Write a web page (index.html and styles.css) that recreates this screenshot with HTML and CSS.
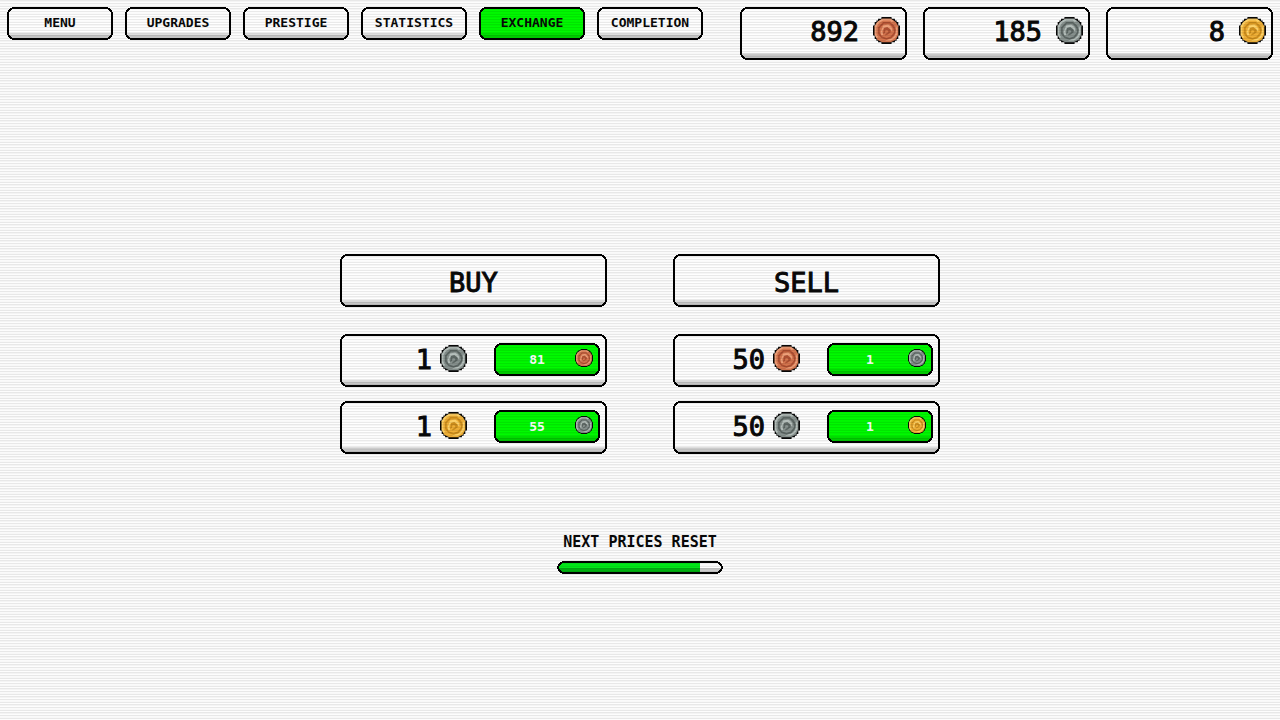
FILE: index.html
```
<!DOCTYPE html>
<html lang="en">
 <head>
 <meta charset="UTF-8">
 <title>Exchange</title>
 <link rel="stylesheet" href="styles.css">
 </head>

 <body>

  <!-- one coin drawing, coloured by .copper / .silver / .gold -->
  <svg class="defs" aria-hidden="true">
   <symbol id="coin" viewBox="0 0 32 32">
    <path class="c_edge" d="M10 0h12v2h4v2h2v2h2v4h2v12h-2v4h-2v2h-2v2h-4v2H10v-2H6v-2H4v-2H2v-4H0V10h2V6h2V4h2V2h4z"/>
    <path class="c_base" d="M11 2h10l6 4 3 5v10l-3 6-6 3H11l-6-3-3-6V11l3-5z"/>
    <path class="c_light" d="M11 2h10l4 3-3 1-2-2h-8L7 7 4 12v8l2 4-2 1-2-4V11l3-5zM27 12l2-1v9l-3 5-5 3h-6v-1l6-1 4-3 2-4z"/>
    <path class="c_dark" d="M12 6h8l5 4 2 5-1 5-4 5-6 2-6-2-4-5V12zm1 2l-5 5v6l3 4 5 2 5-2 4-5-1-5-4-5z"/>
    <path class="c_light" d="M12 10l6-1 4 3 1 4-2 1-1-3-3-2-4 1-2 4 1 4-2 1-1-4z"/>
    <path class="c_dark" d="M13 13l4-1 4 3v3l-4 3-3 1 1-2 3-2v-2l-3-1-1 4-2 1z"/>
   </symbol>
  </svg>

  <header class="top">
   <nav class="tabs">
    <button class="box tab">MENU</button>
    <button class="box tab">UPGRADES</button>
    <button class="box tab">PRESTIGE</button>
    <button class="box tab">STATISTICS</button>
    <button class="box tab green">EXCHANGE</button>
    <button class="box tab">COMPLETION</button>
   </nav>
   <div class="wallet">
    <div class="box purse">892 <svg class="coin copper"><use href="#coin"/></svg></div>
    <div class="box purse">185 <svg class="coin silver"><use href="#coin"/></svg></div>
    <div class="box purse">8 <svg class="coin gold"><use href="#coin"/></svg></div>
   </div>
  </header>

  <main>
   <div class="exchange">
    <section class="column">
     <h2 class="box title">BUY</h2>
     <div class="box offer">1 <svg class="coin silver"><use href="#coin"/></svg>
      <button class="box price green"><span>81</span><svg class="coin small copper"><use href="#coin"/></svg></button>
     </div>
     <div class="box offer">1 <svg class="coin gold"><use href="#coin"/></svg>
      <button class="box price green"><span>55</span><svg class="coin small silver"><use href="#coin"/></svg></button>
     </div>
    </section>
    <section class="column">
     <h2 class="box title">SELL</h2>
     <div class="box offer">50 <svg class="coin copper"><use href="#coin"/></svg>
      <button class="box price green"><span>1</span><svg class="coin small silver"><use href="#coin"/></svg></button>
     </div>
     <div class="box offer">50 <svg class="coin silver"><use href="#coin"/></svg>
      <button class="box price green"><span>1</span><svg class="coin small gold"><use href="#coin"/></svg></button>
     </div>
    </section>
   </div>

   <div class="reset">
    <label for="reset">NEXT PRICES RESET</label>
    <div class="bar"><progress id="reset" value="86" max="100"></progress></div>
   </div>
  </main>

 </body>
</html>
```

FILE: styles.css
```
* { box-sizing: border-box }

body { margin: 0; min-height: 100vh; background-color: #FDFDFD; color: #080808;
       font-family: "DejaVu Sans Mono", monospace }

/* scanlines over everything, three lines every 8px */
body::after { content: ""; position: fixed; inset: 0; pointer-events: none;
              mix-blend-mode: multiply;
              background: repeating-linear-gradient(#EAEAEA 0 1px, #F6F6F6 1px 2px, #FFF 2px 3px,
                #EAEAEA 3px 4px, #FCFCFC 4px 5px, #FAFAFA 5px 6px,
                #EAEAEA 6px 7px, #FFF 7px 8px) }

.defs { display: none }

/* pixel frame with stepped corners */
.box, .bar::after {
       border: 5px solid #000;
       border-image: url("data:image/svg+xml,%3Csvg xmlns='http://www.w3.org/2000/svg' width='13' height='13' shape-rendering='crispEdges'%3E%3Cpath d='M5 0h3v2h-3zM5 11h3v2h-3zM0 5h2v3h-2zM11 5h2v3h-2zM3 1h2v2h-2zM2 2h2v2h-2zM1 3h2v2h-2zM8 1h2v2h-2zM9 2h2v2h-2zM10 3h2v2h-2zM1 8h2v2h-2zM2 9h2v2h-2zM3 10h2v2h-2zM10 8h2v2h-2zM9 9h2v2h-2zM8 10h2v2h-2z'/%3E%3C/svg%3E") 5 }
.box, .bar {
       clip-path: polygon(0 5px, 1px 5px, 1px 3px, 2px 3px, 2px 2px, 3px 2px, 3px 1px, 5px 1px, 5px 0,
         calc(100% - 5px) 0, calc(100% - 5px) 1px, calc(100% - 3px) 1px, calc(100% - 3px) 2px,
         calc(100% - 2px) 2px, calc(100% - 2px) 3px, calc(100% - 1px) 3px, calc(100% - 1px) 5px, 100% 5px,
         100% calc(100% - 5px), calc(100% - 1px) calc(100% - 5px), calc(100% - 1px) calc(100% - 3px),
         calc(100% - 2px) calc(100% - 3px), calc(100% - 2px) calc(100% - 2px), calc(100% - 3px) calc(100% - 2px),
         calc(100% - 3px) calc(100% - 1px), calc(100% - 5px) calc(100% - 1px), calc(100% - 5px) 100%,
         5px 100%, 5px calc(100% - 1px), 3px calc(100% - 1px), 3px calc(100% - 2px), 2px calc(100% - 2px),
         2px calc(100% - 3px), 1px calc(100% - 3px), 1px calc(100% - 5px), 0 calc(100% - 5px)) }
.box { margin: 0; color: inherit; font-family: inherit;
       background: linear-gradient(to top, #C6C6C6 5px, #DEDEDE 5px 7px, #FFF 7px) border-box }
.green { background: linear-gradient(to top, #00CC00 5px, #00E000 5px 7px, #00FA00 7px) border-box }

.top    { display: flex; justify-content: space-between; padding: 7px }
.tabs   { display: flex; gap: 12px; align-items: flex-start }
.tab    { width: 106px; height: 33px; padding: 0 0 1px; font-size: 13px; font-weight: bold;
          line-height: 16px; cursor: pointer }
.wallet { display: flex; gap: 16px }
.purse  { display: flex; align-items: center; justify-content: flex-end; gap: 14px;
          width: 167px; height: 53px; padding: 0 2px 3px 0; font-size: 27px; line-height: 32px }
.purse > .coin { margin-bottom: 3px }

.purse, .title, .offer { -webkit-text-stroke: 1px #080808 }

.coin       { width: 27px; height: 27px; flex: none; stroke: none }
.coin.small { width: 18px; height: 18px }
.c_edge  { fill: #080808 }
.c_base  { fill: var(--base) }
.c_light { fill: var(--light) }
.c_dark  { fill: var(--dark) }
.copper  { --base: #D5754E; --light: #EFA079; --dark: #AE4F32 }
.silver  { --base: #87918E; --light: #B6C0BC; --dark: #5C6663 }
.gold    { --base: #F0B037; --light: #FFD368; --dark: #CC8D1C }

main      { display: flex; flex-direction: column; align-items: center; gap: 78px;
            padding-top: 187px }
.exchange { display: flex; gap: 66px }
.column   { display: flex; flex-direction: column; gap: 14px; width: 267px }
.title    { height: 53px; margin-bottom: 13px; padding-top: 8px; text-align: center;
            font-size: 27px; font-weight: normal; line-height: 32px }
.offer    { display: flex; align-items: center; justify-content: flex-end; gap: 8px;
            height: 53px; padding: 0 2px 2px 0; font-size: 27px; line-height: 32px }
.offer > .coin { margin-bottom: 3px }
.price    { display: flex; align-items: center; width: 106px; height: 33px; margin-left: 19px;
            padding: 0 2px 0 0; color: #FFF; font-size: 13px; font-weight: bold;
            line-height: 16px; -webkit-text-stroke: 0; cursor: pointer }
.price span  { flex: 1 }
.price .coin { margin-bottom: 3px }

.reset      { display: flex; flex-direction: column; align-items: center; gap: 9px;
              font-size: 15px; font-weight: bold; line-height: 20px }
.bar        { position: relative; width: 166px; height: 13px }
.bar::after { content: ""; position: absolute; inset: 0 }
progress    { display: block; appearance: none; width: 100%; height: 100% }
progress::-webkit-progress-bar   { background: linear-gradient(#FFF 7px, #CCC 7px) }
progress::-webkit-progress-value { background: linear-gradient(#00E818 7px, #00B010 7px) }
```
